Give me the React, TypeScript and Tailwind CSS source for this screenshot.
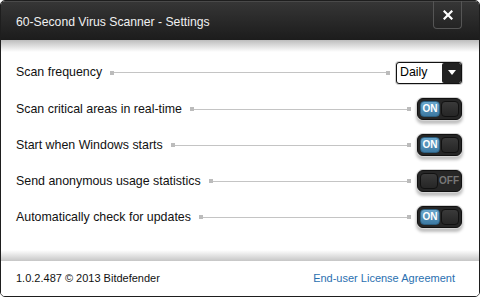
import { ReactNode } from "react";

type Row = { label: string; control: ReactNode };

function Toggle({ on }: { on: boolean }) {
  return (
    <div className="rounded-[7px] p-px bg-[#d4d4d4] shadow-[0_3px_3px_rgba(0,0,0,0.25)]">
      <div className="w-[45px] h-[22px] rounded-[6px] bg-[#262626] border border-[#111] flex items-stretch p-[2px] gap-[1px]">
        {on ? (
          <>
            <div className="flex-1 rounded-[4px] bg-gradient-to-b from-[#6aa6cc] to-[#3d7aa3] border border-[#2c5f80] flex items-center justify-center text-[10px] font-bold text-white leading-none">
              ON
            </div>
            <div className="w-[18px] rounded-[4px] bg-gradient-to-b from-[#3a3a3a] to-[#262626] border border-[#111]" />
          </>
        ) : (
          <>
            <div className="w-[18px] rounded-[4px] bg-gradient-to-b from-[#3a3a3a] to-[#262626] border border-[#111]" />
            <div className="flex-1 flex items-center justify-center text-[10px] font-bold text-[#777] leading-none">
              OFF
            </div>
          </>
        )}
      </div>
    </div>
  );
}

function Dropdown() {
  return (
    <div className="rounded-[4px] p-px bg-[#d0d0d0]">
      <div className="w-[66px] h-[22px] rounded-[3px] border border-[#111] bg-white flex overflow-hidden">
        <div className="flex-1 pl-[3px] flex items-center text-[12.4px] text-black">Daily</div>
        <div className="w-[19px] bg-[#222] rounded-[2px] flex items-center justify-center">
          <svg width="8" height="5" viewBox="0 0 8 5">
            <path d="M0 0h8L4 5z" fill="#fff" />
          </svg>
        </div>
      </div>
    </div>
  );
}

export default function App() {
  const rows: Row[] = [
    { label: "Scan frequency", control: <Dropdown /> },
    { label: "Scan critical areas in real-time", control: <Toggle on /> },
    { label: "Start when Windows starts", control: <Toggle on /> },
    { label: "Send anonymous usage statistics", control: <Toggle on={false} /> },
    { label: "Automatically check for updates", control: <Toggle on /> },
  ];

  return (
    <div className="w-[480px] h-[304px] bg-white" style={{ fontFamily: '"Liberation Sans", Arial, sans-serif' }}>
      <div className="w-[480px] h-[297px] border border-[#1e1e1e] rounded-t-[5px] rounded-b-[5px] overflow-hidden flex flex-col bg-white">
        {/* Title bar */}
        <div className="h-[39px] shrink-0 bg-gradient-to-b from-[#363636] to-[#1c1c1c] border-t border-[#4a4a4a] flex items-start justify-between pl-[15px] pr-[17px]">
          <span className="text-[12.2px] text-[#f0f0f0] mt-[11px]">60-Second Virus Scanner - Settings</span>
          <div className="w-[29px] h-[28px] -mt-px border border-t-0 border-[#555] rounded-b-[4px] flex items-center justify-center">
            <svg width="10" height="10" viewBox="0 0 10 10">
              <path d="M1.5 1.5l7 7M8.5 1.5l-7 7" stroke="#fff" strokeWidth="2.2" strokeLinecap="square" />
            </svg>
          </div>
        </div>

        {/* Content */}
        <div className="flex-1 flex flex-col bg-[linear-gradient(to_bottom,#bdbdbd_0px,#fff_12px,#fff_calc(100%-11px),#c6c6c6_100%)] pt-[14px] pl-[15px] pr-[16px]">
          {rows.map((r, i) => (
            <div key={i} className={`flex items-center ${i === 0 ? "h-[37px]" : "h-[36px]"}`}>
              <span className="text-[12.4px] text-[#111] whitespace-nowrap">{r.label}</span>
              <div className="flex-1 flex items-center mx-[5px]">
                <div className="w-[4px] h-[4px] bg-[#bcbcbc] ml-[3px]" />
                <div className="flex-1 h-px bg-[#c4c4c4]" />
                <div className="w-[4px] h-[4px] bg-[#bcbcbc]" />
              </div>
              {r.control}
            </div>
          ))}
        </div>

        {/* Footer */}
        <div className="h-[35px] shrink-0 bg-white flex items-center justify-between pl-[15px] pr-[24px] text-[11px]">
          <span className="text-[#111]">1.0.2.487 © 2013 Bitdefender</span>
          <span className="text-[#2a6fb0]">End-user License Agreement</span>
        </div>
      </div>
    </div>
  );
}
